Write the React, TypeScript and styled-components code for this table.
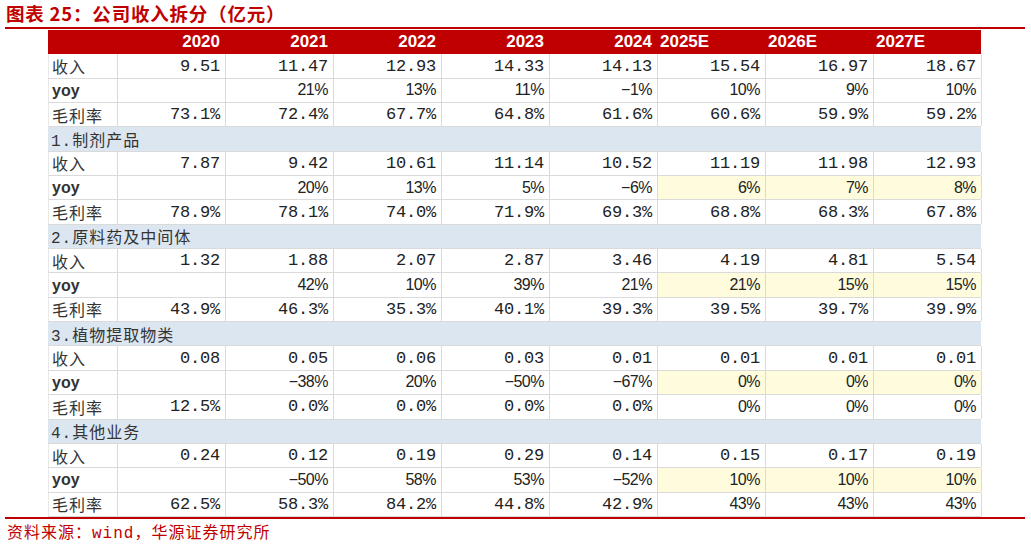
import React from "react";
import styled, { createGlobalStyle, css } from "styled-components";

const Global = createGlobalStyle`
  html, body { margin: 0; padding: 0; background: #ffffff; }
  body { width: 1031px; height: 549px; overflow: hidden; }
`;

const RED = "#C00000";
const GRID = "#DADADA";

const Page = styled.div`
  width: 1031px;
  height: 549px;
  display: flex;
  flex-direction: column;
`;

const Title = styled.h1`
  margin: 0;
  height: 27px;
  padding-left: 6px;
  font: 700 18.5px/27px "Noto Sans CJK SC", sans-serif;
  letter-spacing: 0.8px;
  color: ${RED};
  white-space: nowrap;
`;

const Rule = styled.div`
  height: 2px;
  margin: 0 6px 0 5px;
  background: ${RED};
  flex: none;
`;

const Table = styled.div`
  margin: 1px 0 0 48px;
  width: 933px;
  display: flex;
  flex-direction: column;
`;

type RowKind = "head" | "section" | "data";

const Row = styled.div<{ $kind: RowKind }>`
  display: grid;
  grid-template-columns: 69px repeat(8, 108px);
  height: 24.35px;
  box-sizing: border-box;
  ${(p) =>
    p.$kind === "head" &&
    css`
      background: ${RED};
    `}
  ${(p) =>
    p.$kind === "section" &&
    css`
      background: #dce6f1;
      border-bottom: 1px solid ${GRID};
    `}
  ${(p) =>
    p.$kind === "data" &&
    css`
      background: #ffffff;
      border-bottom: 1px solid ${GRID};
      border-left: 1px solid #e8e8e8;
    `}
`;

type CellKind = "head" | "headE" | "label" | "yoy" | "dec" | "pct" | "section";

const fontFor = (k: CellKind) => {
  switch (k) {
    case "head":
    case "headE":
      return css`
        font: 700 17px "Liberation Sans", Arial, sans-serif;
        color: #ffffff;
      `;
    case "label":
      return css`
        font: 400 16px "Noto Sans CJK SC", sans-serif;
        letter-spacing: 1px;
        color: #333333;
      `;
    case "section":
      return css`
        font: 400 16px "Liberation Mono", "Noto Sans CJK SC", monospace;
        letter-spacing: 1px;
        color: #333333;
      `;
    case "yoy":
      return css`
        font: 700 16px "Liberation Sans", Arial, sans-serif;
        color: #333333;
        padding-top: 1px;
      `;
    case "dec":
      return css`
        font: 400 17px "Liberation Mono", monospace;
        letter-spacing: -0.2px;
        color: #222222;
      `;
    case "pct":
      return css`
        font: 400 16px "Liberation Sans", Arial, sans-serif;
        letter-spacing: -0.5px;
        color: #222222;
      `;
  }
};

const Cell = styled.div<{ $kind: CellKind; $hl?: boolean }>`
  display: flex;
  align-items: center;
  box-sizing: border-box;
  white-space: nowrap;
  overflow: hidden;
  ${(p) => fontFor(p.$kind)}
  ${(p) =>
    p.$kind === "head" || p.$kind === "dec" || p.$kind === "pct"
      ? css`
          justify-content: flex-end;
          padding-right: 5px;
        `
      : css`
          justify-content: flex-start;
          padding-left: 3px;
        `}
  ${(p) =>
    p.$kind === "section" &&
    css`
      grid-column: 1 / -1;
    `}
  ${(p) =>
    p.$kind !== "head" &&
    p.$kind !== "headE" &&
    p.$kind !== "section" &&
    css`
      border-right: 1px solid ${GRID};
    `}
  ${(p) =>
    p.$hl &&
    css`
      background: #fefcdc;
    `}
`;

const Footer = styled.div`
  padding: 4px 0 0 7px;
  font: 400 16px/22px "Liberation Mono", "Noto Sans CJK SC", monospace;
  letter-spacing: 1px;
  color: ${RED};
  white-space: nowrap;
`;

const years = ["2020", "2021", "2022", "2023", "2024", "2025E", "2026E", "2027E"];

type Block = {
  name?: string;
  rev: string[];
  yoy: string[];
  gm: string[];
  hl?: boolean;
};

const blocks: Block[] = [
  {
    rev: ["9.51", "11.47", "12.93", "14.33", "14.13", "15.54", "16.97", "18.67"],
    yoy: ["", "21%", "13%", "11%", "−1%", "10%", "9%", "10%"],
    gm: ["73.1%", "72.4%", "67.7%", "64.8%", "61.6%", "60.6%", "59.9%", "59.2%"],
  },
  {
    name: "1.制剂产品",
    rev: ["7.87", "9.42", "10.61", "11.14", "10.52", "11.19", "11.98", "12.93"],
    yoy: ["", "20%", "13%", "5%", "−6%", "6%", "7%", "8%"],
    gm: ["78.9%", "78.1%", "74.0%", "71.9%", "69.3%", "68.8%", "68.3%", "67.8%"],
    hl: true,
  },
  {
    name: "2.原料药及中间体",
    rev: ["1.32", "1.88", "2.07", "2.87", "3.46", "4.19", "4.81", "5.54"],
    yoy: ["", "42%", "10%", "39%", "21%", "21%", "15%", "15%"],
    gm: ["43.9%", "46.3%", "35.3%", "40.1%", "39.3%", "39.5%", "39.7%", "39.9%"],
    hl: true,
  },
  {
    name: "3.植物提取物类",
    rev: ["0.08", "0.05", "0.06", "0.03", "0.01", "0.01", "0.01", "0.01"],
    yoy: ["", "−38%", "20%", "−50%", "−67%", "0%", "0%", "0%"],
    gm: ["12.5%", "0.0%", "0.0%", "0.0%", "0.0%", "0%", "0%", "0%"],
    hl: true,
  },
  {
    name: "4.其他业务",
    rev: ["0.24", "0.12", "0.19", "0.29", "0.14", "0.15", "0.17", "0.19"],
    yoy: ["", "−50%", "58%", "53%", "−52%", "10%", "10%", "10%"],
    gm: ["62.5%", "58.3%", "84.2%", "44.8%", "42.9%", "43%", "43%", "43%"],
    hl: true,
  },
];

const kindOf = (v: string): CellKind => (v.includes(".") ? "dec" : "pct");

const DataRow: React.FC<{ label: string; values: string[]; labelKind: CellKind; hl?: boolean }> = ({
  label,
  values,
  labelKind,
  hl,
}) => (
  <Row $kind="data">
    <Cell $kind={labelKind}>{label}</Cell>
    {values.map((v, i) => (
      <Cell key={i} $kind={kindOf(v)} $hl={hl && i >= 5}>
        {v}
      </Cell>
    ))}
  </Row>
);

export default function App() {
  return (
    <Page>
      <Global />
      <Title>图表 25：公司收入拆分（亿元）</Title>
      <Rule />
      <Table>
        <Row $kind="head">
          <Cell $kind="headE" />
          {years.map((y) => (
            <Cell key={y} $kind={y.endsWith("E") ? "headE" : "head"}>
              {y}
            </Cell>
          ))}
        </Row>
        {blocks.map((b, bi) => (
          <React.Fragment key={bi}>
            {b.name && (
              <Row $kind="section">
                <Cell $kind="section">{b.name}</Cell>
              </Row>
            )}
            <DataRow label="收入" labelKind="label" values={b.rev} />
            <DataRow label="yoy" labelKind="yoy" values={b.yoy} hl={b.hl} />
            <DataRow label="毛利率" labelKind="label" values={b.gm} />
          </React.Fragment>
        ))}
      </Table>
      <Rule />
      <Footer>资料来源：wind，华源证券研究所</Footer>
    </Page>
  );
}
